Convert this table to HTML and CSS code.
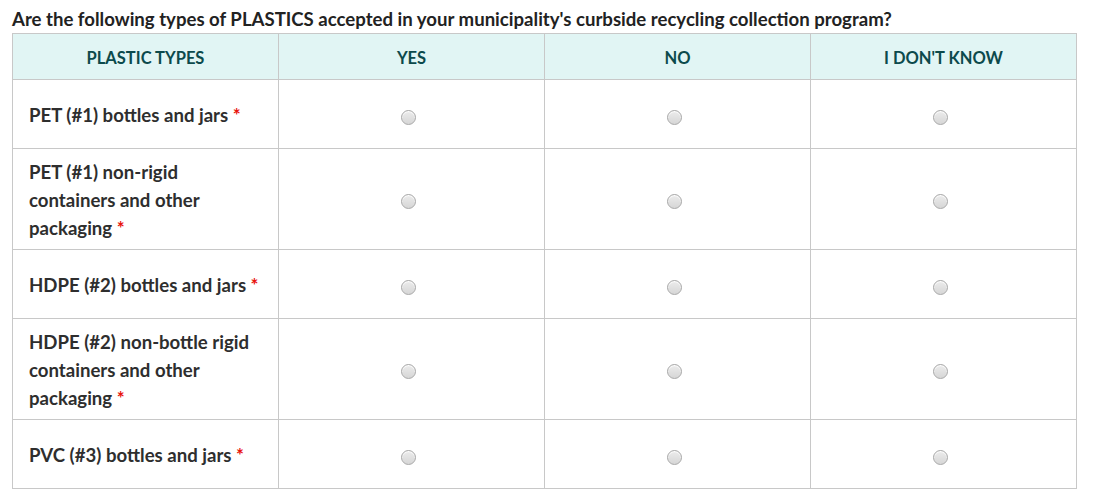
FILE: index.html
```html
<!DOCTYPE html>
<html>
<head>
<meta charset="utf-8">
<link rel="stylesheet" href="styles.css">
</head>
<body>
<div class="question">
  <div class="q-title">Are the following types of PLASTICS accepted in your municipality's curbside recycling collection program?</div>
  <table class="matrix">
    <thead>
      <tr>
        <th>PLASTIC TYPES</th>
        <th>YES</th>
        <th>NO</th>
        <th>I DON'T KNOW</th>
      </tr>
    </thead>
    <tbody>
      <tr class="short">
        <td class="label">PET (#1) bottles and jars <span class="req">*</span></td>
        <td class="opt"><span class="radio"></span></td>
        <td class="opt"><span class="radio"></span></td>
        <td class="opt"><span class="radio"></span></td>
      </tr>
      <tr>
        <td class="label">PET (#1) non-rigid containers and other packaging <span class="req">*</span></td>
        <td class="opt"><span class="radio"></span></td>
        <td class="opt"><span class="radio"></span></td>
        <td class="opt"><span class="radio"></span></td>
      </tr>
      <tr class="short">
        <td class="label">HDPE (#2) bottles and jars <span class="req">*</span></td>
        <td class="opt"><span class="radio"></span></td>
        <td class="opt"><span class="radio"></span></td>
        <td class="opt"><span class="radio"></span></td>
      </tr>
      <tr>
        <td class="label">HDPE (#2) non-bottle rigid containers and other packaging <span class="req">*</span></td>
        <td class="opt"><span class="radio"></span></td>
        <td class="opt"><span class="radio"></span></td>
        <td class="opt"><span class="radio"></span></td>
      </tr>
      <tr class="short">
        <td class="label">PVC (#3) bottles and jars <span class="req">*</span></td>
        <td class="opt"><span class="radio"></span></td>
        <td class="opt"><span class="radio"></span></td>
        <td class="opt"><span class="radio"></span></td>
      </tr>
    </tbody>
  </table>
</div>
</body>
</html>
```
FILE: styles.css
```css
html, body {
  margin: 0;
  padding: 0;
  background: #ffffff;
}
body {
  font-family: Lato, "Liberation Sans", sans-serif;
  color: #2b2b2b;
}
.question {
  padding: 7px 0 0 12px;
}
.q-title {
  font-size: 18.6px;
  font-weight: 700;
  line-height: 24px;
  height: 26px;
  color: #222222;
}
.matrix {
  border-collapse: collapse;
  table-layout: fixed;
  width: 1065px;
}
.matrix th,
.matrix td {
  border: 1px solid #c8c8c8;
  width: 265px;
}
.matrix th {
  background: #e1f5f4;
  color: #0c4a4c;
  font-size: 16.5px;
  font-weight: 700;
  height: 46px;
  padding: 2px 0 0 0;
  box-sizing: border-box;
  text-align: center;
  vertical-align: middle;
}
.matrix td.label {
  font-size: 18.6px;
  font-weight: 700;
  line-height: 28px;
  padding: 9px 16px 7px 16px;
  color: #2e2e2e;
  vertical-align: middle;
}
.matrix tr.short td {
  height: 69px;
  padding-top: 2px;
  padding-bottom: 0;
  box-sizing: border-box;
}
.req {
  color: #e8120c;
}
.matrix td.opt {
  text-align: center;
  vertical-align: middle;
  padding-left: 0;
  padding-right: 0;
}
.radio {
  display: inline-block;
  width: 13px;
  height: 13px;
  border-radius: 50%;
  border: 1px solid #a9a9a9;
  background: linear-gradient(#ececec, #d6d6d6);
  box-shadow: inset 0 1px 1px #ffffff;
  margin-right: 6px;
  vertical-align: middle;
}
```
